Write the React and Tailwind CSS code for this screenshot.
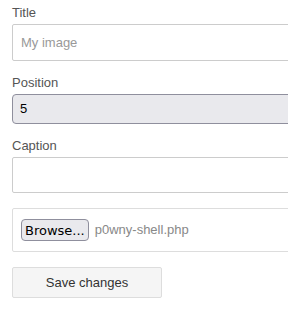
export default function App() {
  const sans = { fontFamily: '"Liberation Sans", Arial, sans-serif' };
  return (
    <div className="w-[288px] h-[311px] overflow-hidden bg-white text-[13px] text-[#555]" style={sans}>
      <div className="pl-[12px] pt-[4px]">
        <div className="leading-[18px] mb-[2px]">Title</div>
        <div className="w-[300px] h-[37px] border border-[#ccc] rounded-[2px] pl-[8px] flex items-center text-[#999] mb-[13px]">
          My image
        </div>
        <div className="leading-[18px] mb-[2px]">Position</div>
        <div className="w-[300px] h-[30px] border border-[#8f8f9d] rounded-[4px] bg-[#e9e9ed] pl-[7px] flex items-center text-black mb-[13px]">
          5
        </div>
        <div className="leading-[18px] mb-[2px]">Caption</div>
        <div className="w-[300px] h-[36px] border border-[#ccc] rounded-[2px] mb-[15px]"></div>
        <div className="w-[300px] h-[44px] border border-[#ddd] rounded-[2px] pl-[8px] flex items-center gap-[6px] mb-[15px]">
          <div
            className="h-[22px] px-[3px] border border-[#8f8f9d] rounded-[4px] bg-[#e9e9ed] text-black flex items-center leading-none"
            style={{ fontFamily: '"DejaVu Sans", sans-serif' }}
          >
            Browse...
          </div>
          <span className="text-[#888]">p0wny-shell.php</span>
        </div>
        <div className="w-[150px] h-[31px] border border-[#ddd] rounded-[2px] bg-[#f5f5f5] text-[#333] flex items-center justify-center">
          Save changes
        </div>
      </div>
    </div>
  );
}
